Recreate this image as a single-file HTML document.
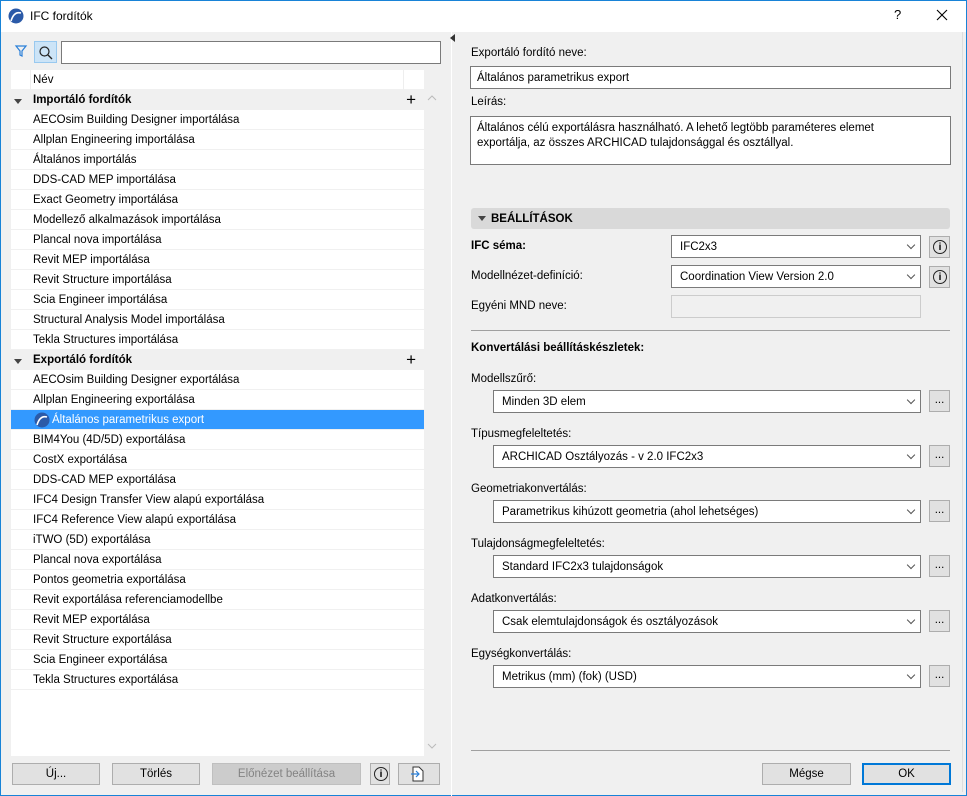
<!DOCTYPE html><html><head><meta charset="utf-8"><style>
*{box-sizing:border-box;margin:0;padding:0}
body{width:967px;height:796px;overflow:hidden;font-family:"Liberation Sans",sans-serif;font-size:11.5px;color:#000;background:#f0f0f0;position:relative}
.a{position:absolute}
.win{left:0;top:0;width:967px;height:796px;border:1px solid #1883d7}
.title{left:1px;top:1px;width:965px;height:31px;background:#fff}
.row{position:absolute;left:11px;width:413px;height:20px;line-height:21px;padding-left:22px;border-bottom:1px solid #f0f0f0;background:#fff;white-space:nowrap}
.hdr{background:#f0f0f0;font-weight:bold;padding-left:22px}
.hdr:before{content:"";position:absolute;left:3px;top:9px;border:4px solid transparent;border-top:5px solid #444;border-bottom:0}
.plus{position:absolute;right:8px;top:0;font-size:17px;font-weight:normal;line-height:19px}
.sel{background:#3399ff;color:#fff}
.in{position:absolute;background:#fff;border:1px solid #7a7a7a;padding-left:6px;line-height:22px;white-space:nowrap}
.sel2{position:absolute;background:#fff;border:1px solid #7a7a7a;padding-left:8px;line-height:22px;height:23px}
.sel2:after{content:"";position:absolute;right:6px;top:6px;width:5px;height:5px;border-right:1px solid #555;border-bottom:1px solid #555;transform:rotate(45deg)}
.btn{position:absolute;background:#e1e1e1;border:1px solid #adadad;text-align:center;line-height:21px;height:22px}
.ib{position:absolute;width:21px;height:22px;background:#e1e1e1;border:1px solid #adadad}
.ib i{position:absolute;left:3px;top:3px;width:14px;height:14px;border:1px solid #222;border-radius:50%;font-style:normal;font-size:10px;line-height:13px;text-align:center;font-weight:bold}
.dots{position:absolute;width:21px;height:22px;background:#e1e1e1;border:1px solid #adadad;text-align:center;line-height:18px}
.lbl{position:absolute;left:471px;white-space:nowrap}
</style></head><body>
<div class="a win"></div>
<div class="a title"></div>
<svg class="a" style="left:8px;top:8px" width="16" height="16"><circle cx="8" cy="8" r="7.5" fill="#2b5aa8"/><path d="M3 13 Q6 3 13 5" stroke="#fff" stroke-width="1.6" fill="none"/></svg>
<div class="a" style="left:30px;top:9px;font-size:12px">IFC fordítók</div>
<div class="a" style="left:894px;top:7px;font-size:13px">?</div>
<svg class="a" style="left:936px;top:9px" width="12" height="12"><path d="M1 1L11 11M11 1L1 11" stroke="#000" stroke-width="1.1"/></svg>
<div class="a" style="left:451px;top:32px;width:1px;height:764px;background:#fff"></div>
<svg class="a" style="left:14px;top:44px" width="14" height="14"><path d="M2 2H12L8 7V12L6 11V7Z" fill="none" stroke="#2a7fd8" stroke-width="1.2"/></svg>
<div class="a" style="left:34px;top:41px;width:23px;height:22px;background:#cce4f7;border:1px solid #99c9ef"></div>
<svg class="a" style="left:38px;top:45px" width="16" height="16"><circle cx="6.5" cy="6.5" r="4.5" fill="none" stroke="#222" stroke-width="1.2"/><path d="M10 10L14 14" stroke="#222" stroke-width="1.3"/></svg>
<div class="a" style="left:61px;top:41px;width:380px;height:23px;background:#fff;border:1px solid #7a7a7a"></div>
<div class="a" style="left:11px;top:70px;width:413px;height:686px;background:#fff"></div>
<div class="row" style="top:70px;padding-left:22px">Név</div>
<div class="a" style="left:30px;top:70px;width:1px;height:20px;background:#eee"></div>
<div class="a" style="left:403px;top:70px;width:1px;height:20px;background:#eee"></div>
<svg class="a" style="left:427px;top:94px" width="10" height="8"><path d="M1 6L5 2L9 6" fill="none" stroke="#bbb"/></svg>
<svg class="a" style="left:427px;top:742px" width="10" height="8"><path d="M1 2L5 6L9 2" fill="none" stroke="#bbb"/></svg>
<div class="row hdr" style="top:90px">Importáló fordítók<span class="plus">+</span></div>
<div class="row" style="top:110px">AECOsim Building Designer importálása</div>
<div class="row" style="top:130px">Allplan Engineering importálása</div>
<div class="row" style="top:150px">Általános importálás</div>
<div class="row" style="top:170px">DDS-CAD MEP importálása</div>
<div class="row" style="top:190px">Exact Geometry importálása</div>
<div class="row" style="top:210px">Modellező alkalmazások importálása</div>
<div class="row" style="top:230px">Plancal nova importálása</div>
<div class="row" style="top:250px">Revit MEP importálása</div>
<div class="row" style="top:270px">Revit Structure importálása</div>
<div class="row" style="top:290px">Scia Engineer importálása</div>
<div class="row" style="top:310px">Structural Analysis Model importálása</div>
<div class="row" style="top:330px">Tekla Structures importálása</div>
<div class="row hdr" style="top:350px">Exportáló fordítók<span class="plus">+</span></div>
<div class="row" style="top:370px">AECOsim Building Designer exportálása</div>
<div class="row" style="top:390px">Allplan Engineering exportálása</div>
<div class="row sel" style="top:410px;padding-left:41px">Általános parametrikus export</div>
<svg class="a" style="left:34px;top:412px" width="16" height="16"><circle cx="8" cy="8" r="7.5" fill="#2b5aa8"/><path d="M3 13 Q6 3 13 5" stroke="#fff" stroke-width="1.6" fill="none"/></svg>
<div class="row" style="top:430px">BIM4You (4D/5D) exportálása</div>
<div class="row" style="top:450px">CostX exportálása</div>
<div class="row" style="top:470px">DDS-CAD MEP exportálása</div>
<div class="row" style="top:490px">IFC4 Design Transfer View alapú exportálása</div>
<div class="row" style="top:510px">IFC4 Reference View alapú exportálása</div>
<div class="row" style="top:530px">iTWO (5D) exportálása</div>
<div class="row" style="top:550px">Plancal nova exportálása</div>
<div class="row" style="top:570px">Pontos geometria exportálása</div>
<div class="row" style="top:590px">Revit exportálása referenciamodellbe</div>
<div class="row" style="top:610px">Revit MEP exportálása</div>
<div class="row" style="top:630px">Revit Structure exportálása</div>
<div class="row" style="top:650px">Scia Engineer exportálása</div>
<div class="row" style="top:670px">Tekla Structures exportálása</div>
<div class="btn" style="left:12px;top:763px;width:88px">Új...</div>
<div class="btn" style="left:112px;top:763px;width:88px">Törlés</div>
<div class="btn" style="left:212px;top:763px;width:149px;background:#ccc;color:#838383;border-color:#bfbfbf">Előnézet beállítása</div>
<div class="ib" style="left:370px;top:763px;width:20px"><i>i</i></div>
<div class="btn" style="left:398px;top:763px;width:42px"></div>
<svg class="a" style="left:410px;top:766px" width="16" height="16"><path d="M3 1H9L13 5V15H3Z" fill="#fff" stroke="#333"/><path d="M1 8H9M6 5L9 8L6 11" stroke="#2a7fd8" fill="none" stroke-width="1.2"/></svg>
<svg class="a" style="left:450px;top:34px" width="6" height="8"><path d="M5 0V8L0 4Z" fill="#333"/></svg>
<div class="a" style="left:962px;top:32px;width:1px;height:760px;background:#ddd"></div>
<div class="lbl" style="top:47px">Exportáló fordító neve:</div>
<div class="in" style="left:470px;top:66px;width:481px;height:23px">Általános parametrikus export</div>
<div class="lbl" style="top:96px">Leírás:</div>
<div class="in" style="left:470px;top:116px;width:481px;height:49px;line-height:15px;padding-top:4px;white-space:normal;padding-right:30px">Általános célú exportálásra használható. A lehető legtöbb paraméteres elemet exportálja, az összes ARCHICAD tulajdonsággal és osztállyal.</div>
<div class="a" style="left:471px;top:208px;width:479px;height:21px;background:#d9d9d9;border-radius:3px;font-weight:bold;line-height:22px;padding-left:20px">BEÁLLÍTÁSOK</div>
<div class="a" style="left:478px;top:216px;border:4px solid transparent;border-top:5px solid #444;border-bottom:0"></div>
<div class="lbl" style="top:240px;font-weight:bold">IFC séma:</div>
<div class="sel2" style="left:671px;top:235px;width:250px">IFC2x3</div>
<div class="ib" style="left:929px;top:236px"><i>i</i></div>
<div class="lbl" style="top:270px">Modellnézet-definíció:</div>
<div class="sel2" style="left:671px;top:265px;width:250px">Coordination View Version 2.0</div>
<div class="ib" style="left:929px;top:266px"><i>i</i></div>
<div class="lbl" style="top:300px">Egyéni MND neve:</div>
<div class="a" style="left:671px;top:295px;width:250px;height:23px;border:1px solid #ccc;background:#f0f0f0"></div>
<div class="a" style="left:471px;top:330px;width:479px;height:1px;background:#a0a0a0"></div>
<div class="lbl" style="top:342px;font-weight:bold">Konvertálási beállításkészletek:</div>
<div class="lbl" style="top:373px">Modellszűrő:</div>
<div class="sel2" style="left:493px;top:390px;width:428px">Minden 3D elem</div><div class="dots" style="left:929px;top:390px">...</div>
<div class="lbl" style="top:428px">Típusmegfeleltetés:</div>
<div class="sel2" style="left:493px;top:445px;width:428px">ARCHICAD Osztályozás - v 2.0 IFC2x3</div><div class="dots" style="left:929px;top:445px">...</div>
<div class="lbl" style="top:483px">Geometriakonvertálás:</div>
<div class="sel2" style="left:493px;top:500px;width:428px">Parametrikus kihúzott geometria (ahol lehetséges)</div><div class="dots" style="left:929px;top:500px">...</div>
<div class="lbl" style="top:538px">Tulajdonságmegfeleltetés:</div>
<div class="sel2" style="left:493px;top:555px;width:428px">Standard IFC2x3 tulajdonságok</div><div class="dots" style="left:929px;top:555px">...</div>
<div class="lbl" style="top:593px">Adatkonvertálás:</div>
<div class="sel2" style="left:493px;top:610px;width:428px">Csak elemtulajdonságok és osztályozások</div><div class="dots" style="left:929px;top:610px">...</div>
<div class="lbl" style="top:648px">Egységkonvertálás:</div>
<div class="sel2" style="left:493px;top:665px;width:428px">Metrikus (mm) (fok) (USD)</div><div class="dots" style="left:929px;top:665px">...</div>
<div class="a" style="left:471px;top:750px;width:479px;height:1px;background:#a0a0a0"></div>
<div class="btn" style="left:762px;top:763px;width:89px">Mégse</div>
<div class="btn" style="left:862px;top:763px;width:89px;border:2px solid #0078d7;line-height:19px">OK</div>
</body></html>
